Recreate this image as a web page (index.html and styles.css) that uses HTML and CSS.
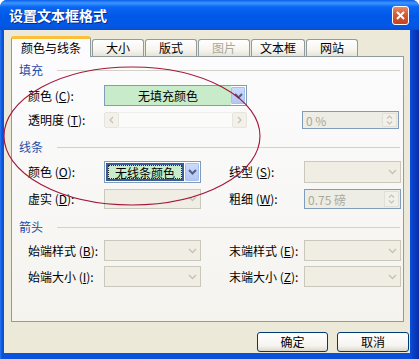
FILE: index.html
```html
<!DOCTYPE html>
<html lang="zh-CN">
<head>
<meta charset="utf-8">
<title>设置文本框格式</title>
<link rel="stylesheet" href="styles.css">
</head>
<body>
<div class="window">
  <div class="titlebar">
    <span class="title">设置文本框格式</span>
    <span class="close"><svg width="9" height="9" viewBox="0 0 9 9"><path d="M1 1L8 8M8 1L1 8" stroke="#fff" stroke-width="2" fill="none"/></svg></span>
  </div>
  <div class="client">
    <div class="tabs">
      <div class="tab active">颜色与线条</div>
      <div class="tab">大小</div>
      <div class="tab">版式</div>
      <div class="tab disabled">图片</div>
      <div class="tab">文本框</div>
      <div class="tab">网站</div>
    </div>
    <div class="panel">
      <div class="sect"><span>填充</span><i></i></div>
      <div class="grid g1">
        <label>颜色 (<u>C</u>):</label>
        <div class="combo wide">
          <div class="val green">无填充颜色</div>
          <div class="drop hot"><svg width="9" height="6" viewBox="0 0 9 6"><path d="M1 1l3.5 3.5L8 1" fill="none" stroke="currentColor" stroke-width="2"/></svg></div>
        </div>
        <label>透明度 (<u>T</u>):</label>
        <div class="hscroll">
          <span class="sbtn"><svg width="5" height="8" viewBox="0 0 5 8"><path d="M4 1L1 4l3 3" fill="none" stroke="currentColor" stroke-width="1.5"/></svg></span>
          <span class="track"></span>
          <span class="sbtn"><svg width="5" height="8" viewBox="0 0 5 8"><path d="M1 1l3 3-3 3" fill="none" stroke="currentColor" stroke-width="1.5"/></svg></span>
        </div>
        <div class="spin pct">
          <span class="sval">0 %</span>
          <span class="sarrows"><svg width="7" height="12" viewBox="0 0 7 12"><path d="M1 4.5l2.5-2.5L6 4.5M1 7.5l2.5 2.5L6 7.5" fill="none" stroke="currentColor" stroke-width="1.2"/></svg></span>
        </div>
      </div>

      <div class="sect s2"><span>线条</span><i></i></div>
      <div class="grid g2">
        <label>颜色 (<u>O</u>):</label>
        <div class="combo">
          <div class="val green focus">无线条颜色</div>
          <div class="drop hot"><svg width="9" height="6" viewBox="0 0 9 6"><path d="M1 1l3.5 3.5L8 1" fill="none" stroke="currentColor" stroke-width="2"/></svg></div>
        </div>
        <label class="rl">线型 (<u>S</u>):</label>
        <div class="combo off">
          <div class="val"></div>
          <div class="drop"><svg width="9" height="6" viewBox="0 0 9 6"><path d="M1 1l3.5 3.5L8 1" fill="none" stroke="currentColor" stroke-width="1.5"/></svg></div>
        </div>
        <label>虚实 (<u>D</u>):</label>
        <div class="combo off">
          <div class="val"></div>
          <div class="drop"><svg width="9" height="6" viewBox="0 0 9 6"><path d="M1 1l3.5 3.5L8 1" fill="none" stroke="currentColor" stroke-width="1.5"/></svg></div>
        </div>
        <label class="rl">粗细 (<u>W</u>):</label>
        <div class="spin">
          <span class="sval">0.75 磅</span>
          <span class="sarrows"><svg width="7" height="12" viewBox="0 0 7 12"><path d="M1 4.5l2.5-2.5L6 4.5M1 7.5l2.5 2.5L6 7.5" fill="none" stroke="currentColor" stroke-width="1.2"/></svg></span>
        </div>
      </div>

      <div class="sect s3"><span>箭头</span><i></i></div>
      <div class="grid g3">
        <label>始端样式 (<u>B</u>):</label>
        <div class="combo off">
          <div class="val"></div>
          <div class="drop"><svg width="9" height="6" viewBox="0 0 9 6"><path d="M1 1l3.5 3.5L8 1" fill="none" stroke="currentColor" stroke-width="1.5"/></svg></div>
        </div>
        <label class="rl">末端样式 (<u>E</u>):</label>
        <div class="combo off">
          <div class="val"></div>
          <div class="drop"><svg width="9" height="6" viewBox="0 0 9 6"><path d="M1 1l3.5 3.5L8 1" fill="none" stroke="currentColor" stroke-width="1.5"/></svg></div>
        </div>
        <label>始端大小 (<u>I</u>):</label>
        <div class="combo off">
          <div class="val"></div>
          <div class="drop"><svg width="9" height="6" viewBox="0 0 9 6"><path d="M1 1l3.5 3.5L8 1" fill="none" stroke="currentColor" stroke-width="1.5"/></svg></div>
        </div>
        <label class="rl">末端大小 (<u>Z</u>):</label>
        <div class="combo off">
          <div class="val"></div>
          <div class="drop"><svg width="9" height="6" viewBox="0 0 9 6"><path d="M1 1l3.5 3.5L8 1" fill="none" stroke="currentColor" stroke-width="1.5"/></svg></div>
        </div>
      </div>
    </div>
    <div class="buttons">
      <button class="btn ok">确定</button>
      <button class="btn cancel">取消</button>
    </div>
  </div>
</div>
<svg class="mark" width="419" height="359" viewBox="0 0 419 359"><ellipse cx="132" cy="136" rx="128" ry="69" fill="none" stroke="#A3173A" stroke-width="1.1"/></svg>
</body>
</html>
```
FILE: styles.css
```css
* { box-sizing: border-box; }
html, body { margin: 0; padding: 0; }
body {
  width: 419px;
  height: 359px;
  overflow: hidden;
  position: relative;
  background: #fff;
  font-family: "Noto Sans CJK SC", "Noto Sans", sans-serif;
  font-size: 12px;
  color: #000;
}
.window {
  height: 359px;
  display: flex;
  flex-direction: column;
  background: linear-gradient(to right, #2a78f0 0, #0a52dc 2px, #0a4fd8 calc(100% - 9px), #0840c8 calc(100% - 6px), #0a2da8 100%);
  border-radius: 7px 7px 0 0;
}
.titlebar {
  height: 30px;
  flex: none;
  display: flex;
  align-items: center;
  justify-content: space-between;
  padding: 0 10px 0 9px;
  border-radius: 7px 7px 0 0;
  background: linear-gradient(to bottom, #0a5fe8 0, #3d95ff 3px, #0a66f2 7px, #0058e8 16px, #0258e6 25px, #0a4fd2 30px);
}
.title {
  color: #fff;
  font-weight: bold;
  font-size: 14px;
  line-height: 16px;
  text-shadow: 1px 1px 0 #0a2a8c;
}
.close {
  width: 17px;
  height: 19px;
  border: 1px solid #fff;
  border-radius: 3px;
  background: linear-gradient(to bottom, #e98a6a, #d55a32 45%, #c8431f);
  display: flex;
  align-items: center;
  justify-content: center;
}
.client {
  flex: 1;
  margin: 0 9px 6px 4px;
  background: #ece9d8;
  padding: 6px 1px 0 7px;
  display: flex;
  flex-direction: column;
}
.tabs {
  height: 20px;
  display: flex;
  align-items: flex-end;
  gap: 1px;
  position: relative;
  z-index: 1;
}
.tab {
  height: 17px;
  min-width: 52px;
  padding: 0 8px;
  border: 1px solid #919b9c;
  border-bottom: none;
  border-radius: 3px 3px 0 0;
  background: linear-gradient(to bottom, #ffffff, #f6f5f0 60%, #e6e4da);
  text-align: center;
  line-height: 16px;
  white-space: nowrap;
}
.tab.active {
  height: 21px;
  margin-bottom: -1px;
  padding: 0 9px;
  border-top: 3px solid #fbbf3c;
  background: #fcfcfe;
  line-height: 17px;
}
.tab.disabled { color: #aca899; }
.panel {
  height: 266px;
  flex: none;
  margin-right: 5px;
  border: 1px solid #919b9c;
  background: linear-gradient(to bottom, #fcfcfe, #f4f3ee);
  padding: 6px 0 0 7px;
}
.sect {
  height: 14px;
  display: flex;
  align-items: center;
  color: #1c4daa;
  line-height: 14px;
}
.sect i {
  flex: 1;
  height: 0;
  border-top: 1px solid #d4d2c4;
  margin: 0 3px 0 14px;
}
.s2 { margin-top: 11px; }
.s3 { margin-top: 11px; }
.grid {
  display: grid;
  grid-template-columns: 76px 97px 28px 75px 97px;
  margin-left: 9px;
}
.g1 { margin-top: 8px; grid-template-rows: 21px 18px; row-gap: 5px; }
.g2 { margin-top: 7px; grid-template-rows: 22px 20px; row-gap: 6px; }
.g3 { margin-top: 6px; grid-template-rows: 21px 21px; row-gap: 5px; }
.grid label {
  grid-column: 1;
  align-self: center;
  white-space: nowrap;
  line-height: 14px;
}
.grid label.rl { grid-column: 4; }
.grid u { text-decoration: underline; }
.combo {
  display: flex;
  border: 1px solid #7f9db9;
  background: #fff;
}
.combo.wide, .hscroll { grid-column: 2 / 5; width: 143px; }
.val {
  flex: 1;
  display: flex;
  align-items: center;
  justify-content: center;
  white-space: nowrap;
}
.val.green { background: #c8ecca; }
.val.focus {
  margin: 1px;
  border: 2px solid #3c5a9a;
  outline: 1px dotted #2a2a2a;
  outline-offset: -3px;
}
.drop {
  width: 15px;
  display: flex;
  align-items: center;
  justify-content: center;
  color: #c6c3b4;
}
.drop.hot {
  margin: 1px 1px 1px 0;
  width: 14px;
  border: 1px solid #a9bfee;
  border-radius: 1px;
  background: linear-gradient(to bottom, #cbd9fc, #b3c6f4);
  color: #4d6185;
}
.combo.off {
  border-color: #cac8bb;
  background: #efede4;
}
.hscroll {
  align-self: center;
  height: 16px;
  display: flex;
  background: #fbfbf9;
}
.sbtn {
  width: 15px;
  height: 16px;
  display: flex;
  align-items: center;
  justify-content: center;
  border: 1px solid #e6e4dc;
  border-radius: 2px;
  background: #f2f1ea;
  color: #c8c6bb;
}
.track {
  flex: 1;
  border-top: 1px solid #f0efe9;
  border-bottom: 1px solid #f0efe9;
}
.spin {
  grid-column: 5;
  display: flex;
  align-items: stretch;
  border: 1px solid #7f9db9;
  background: #eeede5;
}
.spin.pct { margin-left: -2px; width: 97px; }
.sval {
  flex: 1;
  display: flex;
  align-items: center;
  padding-left: 3px;
  color: #aca899;
  white-space: nowrap;
}
.sarrows {
  width: 15px;
  display: flex;
  align-items: center;
  justify-content: center;
  color: #c6c3b4;
  margin: 1px;
  border: 1px solid #e2e0d6;
  background: #f1f0ea;
}
.buttons {
  margin-top: 10px;
  display: flex;
  justify-content: flex-end;
  gap: 9px;
}
.btn {
  height: 20px;
  padding: 0;
  border: 1px solid #003c74;
  border-radius: 3px;
  background: linear-gradient(to bottom, #ffffff, #f5f4ef 70%, #dcd8cc);
  font-family: "Noto Sans CJK SC", "Noto Sans", sans-serif;
  font-size: 12px;
  line-height: 16px;
  color: #000;
}
.btn.ok { width: 71px; }
.btn.cancel { width: 72px; }
.mark {
  position: absolute;
  left: 0;
  top: 0;
  pointer-events: none;
}
```
